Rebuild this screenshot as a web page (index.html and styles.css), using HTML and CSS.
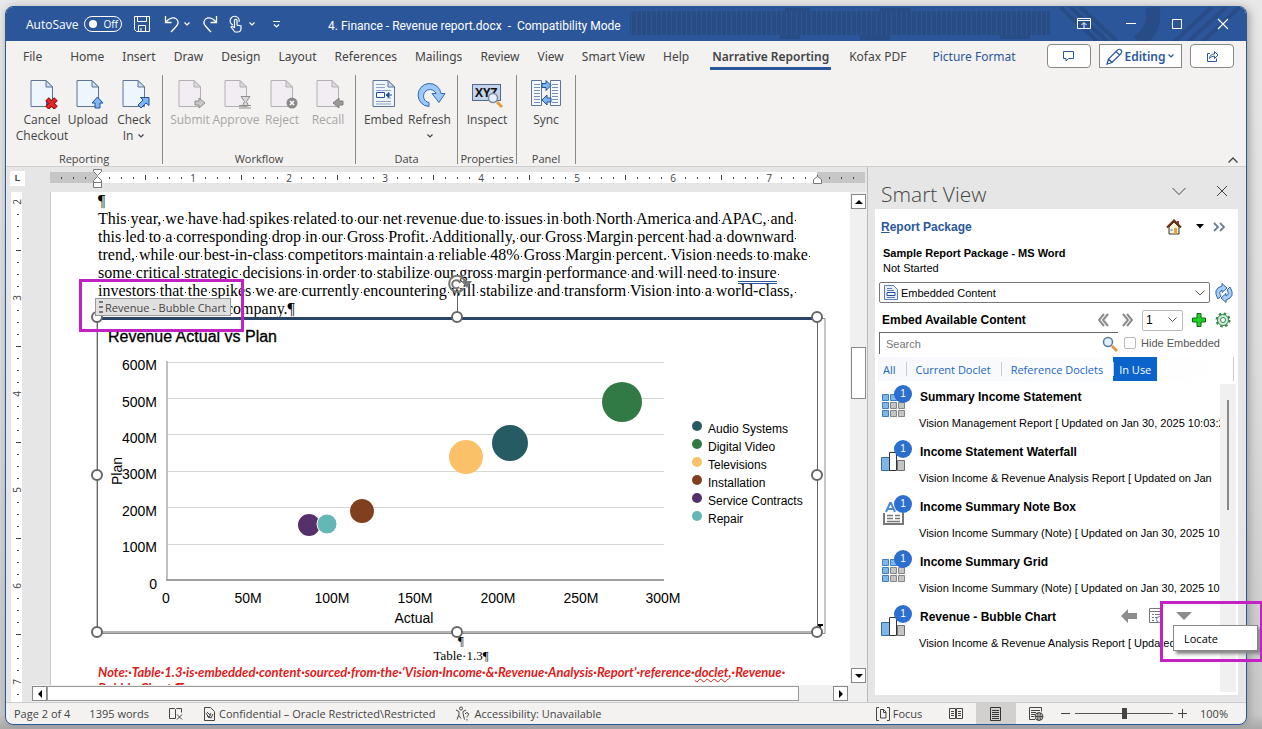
FILE: index.html
```html
<!DOCTYPE html>
<html lang="en">
  <head>
    <title>4. Finance - Revenue report.docx</title>
    <meta charset="UTF-8">
    <meta name="viewport" content="width=device-width, initial-scale=1.0">
    <link rel="stylesheet" href="styles.css">
  </head>

  <body>
    <!-- Shared icon shapes -->
    <svg class="defs" width="0" height="0">
      <symbol id="chevron" viewBox="0 0 8 8"><path d="M1.5 2.5l2.5 2.5 2.5-2.5" fill="none" stroke="currentColor" stroke-width="1.2"/></symbol>
      <symbol id="doc" viewBox="0 0 32 32">
        <path d="M5 3.500h15l6.500 6.500v19.500h-21.500z" fill="#eef5fd" stroke="#5c7596"/>
        <path d="M20 3.500v6.500h6.500z" fill="#cfdff2" stroke="#5c7596"/>
      </symbol>
      <symbol id="doc-off" viewBox="0 0 32 32">
        <path d="M5 3.500h15l6.500 6.500v19.500h-21.500z" fill="#f2edf2" stroke="#b3b0b3"/>
        <path d="M20 3.500v6.500h6.500z" fill="#dcd9dc" stroke="#b3b0b3"/>
      </symbol>
      <symbol id="grid" viewBox="0 0 34 34">
        <g fill="#7fb5e8" stroke="#3f7fc0"><path d="M2.500 9.500h6v6h-6zM2.500 17.500h6v6h-6zM2.500 25.500h6v6h-6zM10.500 9.500h6v6h-6z"/></g>
        <g fill="#c4c4c4" stroke="#858585"><path d="M10.500 17.500h6v6h-6zM18.500 17.500h6v6h-6zM10.500 25.500h6v6h-6zM18.500 25.500h6v6h-6zM18.500 9.500h6v6h-6z"/></g>
      </symbol>
      <symbol id="bars" viewBox="0 0 34 34">
        <path d="M1.500 17.500h8v13h-8z" fill="#7fb5e8" stroke="#2f6fb0"/>
        <path d="M17.500 20.500h7v10h-7z" fill="#c4c4c4" stroke="#707070"/>
        <path d="M9.500 12.500h7v18h-7z" fill="#fff" stroke="#333"/>
      </symbol>
      <symbol id="note" viewBox="0 0 34 34">
        <path d="M6 17l4-9h1l4 9M8 14h5" fill="none" stroke="#4a8ad0" stroke-width="2"/>
        <path d="M4 18v11h19v-11" fill="none" stroke="#777" stroke-width="2"/>
        <path d="M7 20.500h6M15 20.500h5M7 23.500h6M15 23.500h5M7 26.500h13" stroke="#777" stroke-width="1.500"/>
      </symbol>
    </svg>

    <div class="window">
      <header class="titlebar">
        <svg class="titlebar-art" width="440" height="34" aria-hidden="true">
          <defs><pattern id="lines" width="5" height="24" patternUnits="userSpaceOnUse"><path d="M1.500 0v24" stroke="#31568f"/></pattern></defs>
          <path d="M0 4h155v-3h25v3h70v-3h30v3h140v24h-20v4h-30v-4h-110v5h-30v-5h-60v4h-20v-4h-150z" fill="#284c86"/>
          <path d="M0 4h420v24h-420z" fill="url(#lines)"/>
        </svg>
        <svg class="titlebar-stripes" width="190" height="34" aria-hidden="true">
          <g stroke="#284c86" fill="none"><path d="M4 0l38 35M14 0l38 35M24 0l38 35" stroke-width="4"/><path d="M96 0q6 20-14 35" stroke-width="14"/><path d="M118 35l38-35M132 35l38-35M146 35l38-35" stroke-width="4"/></g>
        </svg>
        <div class="quick">
          <span id="autosave-label">AutoSave</span>
          <button class="toggle" aria-labelledby="autosave-label"><i></i>Off</button>
          <button class="bare" aria-label="Save"><svg width="18" height="18" fill="none" stroke="#fff"><path d="M1.500 1.500h15v15h-13l-2-2zM4.500 1.500v5h9v-5M5.500 16.500v-6h7v6M8 16v-3"/></svg></button>
          <button class="bare undo" aria-label="Undo"><svg width="16" height="18" fill="none" stroke="#fff" stroke-width="1.300"><path d="M1.500 1v6.500h6M1.500 7.500q4-5 9-4.500 4 1.500 3.500 5.500-.5 2-7 8.500"/></svg><svg class="chev"><use href="#chevron"/></svg></button>
          <button class="bare" aria-label="Redo"><svg width="16" height="18" fill="none" stroke="#fff" stroke-width="1.300"><path d="M14.500 1v6.500h-6M14.500 7.500q-4-5-9-4.500-4 1.500-3.500 5.500.5 2 7 8.500"/></svg></button>
          <button class="bare touch" aria-label="Touch mode"><svg width="14" height="18" fill="none" stroke="#fff" stroke-width="1.200"><path d="M4 10a4.500 4.500 0 1 1 6-3M5.500 13v-8q1.500-1.500 2.500 0v5l4 1v3q-.5 3-3 3h-3l-4-5q1-1.500 3.500 1"/></svg><svg class="chev"><use href="#chevron"/></svg></button>
          <button class="bare" aria-label="Customize toolbar"><svg width="9" height="9" fill="none" stroke="#fff" stroke-width="1.200"><path d="M1 1.500h7M2 4.500l2.500 2.500 2.500-2.500"/></svg></button>
        </div>
        <h1>4. Finance - Revenue report.docx&nbsp; -&nbsp; Compatibility Mode</h1>
        <div class="controls">
          <button class="bare" aria-label="Ribbon display options"><svg width="14" height="12" fill="none" stroke="#fff"><path d="M.5 .5h13v10h-13zM.5 2.500h13M7 10v-5M4.500 7l2.500-2.500 2.500 2.500"/></svg></button>
          <button class="bare" aria-label="Minimize"><svg width="12" height="12" stroke="#fff"><path d="M1 5.500h10"/></svg></button>
          <button class="bare" aria-label="Maximize"><svg width="12" height="12" fill="none" stroke="#fff"><path d="M1.500 1.500h9v9h-9z"/></svg></button>
          <button class="bare" aria-label="Close"><svg width="12" height="12" stroke="#fff" stroke-width="1.200"><path d="M1 1l10 10M11 1l-10 10"/></svg></button>
        </div>
      </header>

      <nav class="tabs">
        <a href="#" class="file">File</a>
        <a href="#">Home</a>
        <a href="#">Insert</a>
        <a href="#">Draw</a>
        <a href="#">Design</a>
        <a href="#">Layout</a>
        <a href="#">References</a>
        <a href="#">Mailings</a>
        <a href="#">Review</a>
        <a href="#">View</a>
        <a href="#">Smart View</a>
        <a href="#">Help</a>
        <a href="#" class="active">Narrative Reporting</a>
        <a href="#">Kofax PDF</a>
        <a href="#" class="context">Picture Format</a>
        <div class="tab-actions">
          <button aria-label="Comments"><svg width="12" height="11" fill="none" stroke="#2b579a"><path d="M.5 .5h10v7h-5l-2.500 2.500v-2.500h-2.500z"/></svg></button>
          <button class="editing"><svg width="17" height="17" fill="none" stroke="#2b579a" stroke-width="1.200"><path d="M1 16l1.500-5 9-9q2-1.500 3.500 0t0 3.500l-9 9zM10 3.500l3.500 3.500M2.500 11l3.500 3.500"/></svg>Editing<svg class="chev"><use href="#chevron"/></svg></button>
          <button aria-label="Share"><svg width="13" height="12" fill="none" stroke="#2b579a"><path d="M4 3.500h-2.500v8h9v-3M3.500 8.500q.5-4.500 5-4.500v-2.500l3.500 3.500-3.500 3.500v-2.500q-3 0-5 2.500z"/></svg></button>
        </div>
      </nav>

      <div class="ribbon">
        <section class="group reporting">
          <div class="tools">
            <button><svg width="32" height="32"><use href="#doc"/><path d="M20 23h9v7h-9z" fill="#2b6cc0"/><path d="M21 22l9 9M30 22l-9 9" stroke="#8c1010" stroke-width="5"/><path d="M21.500 22.500l8 8M29.500 22.500l-8 8" stroke="#e8262a" stroke-width="3"/></svg>Cancel<br>Checkout</button>
            <button><svg width="32" height="32"><use href="#doc"/><path d="M25.500 20l5.500 6h-3v5h-5v-5h-3z" fill="#7fb4f5" stroke="#1f4f9c"/></svg>Upload</button>
            <button><svg width="32" height="32"><use href="#doc"/><path d="M31 20.500v8l-3-2.500-5 5-3-3 5-5-2.500-2.500z" fill="#7fb4f5" stroke="#1f4f9c"/></svg>Check<br><span>In <svg class="chev"><use href="#chevron"/></svg></span></button>
          </div>
          <h2>Reporting</h2>
        </section>
        <section class="group workflow">
          <div class="tools">
            <button disabled><svg width="32" height="32"><use href="#doc-off"/><path d="M21 24h4v-3l6 5-6 5v-3h-4z" fill="#c9c9c9" stroke="#8f8f8f"/></svg>Submit</button>
            <button disabled><svg width="32" height="32"><use href="#doc-off"/><path d="M21 19.500h9l-3.500 5 2 4.500h-6l2-4.500zM19 28.500h12M19 31h12" fill="#d8d8d8" stroke="#8f8f8f"/></svg>Approve</button>
            <button disabled><svg width="32" height="32"><use href="#doc-off"/><circle cx="26" cy="26" r="5.500" fill="#8a8a8a"/><path d="M24 24l4 4M28 24l-4 4" stroke="#fff" stroke-width="1.500"/></svg>Reject</button>
            <button disabled><svg width="32" height="32"><use href="#doc-off"/><path d="M31 24h-4v-3l-6 5 6 5v-3h4z" fill="#999" stroke="#808080"/></svg>Recall</button>
          </div>
          <h2>Workflow</h2>
        </section>
        <section class="group data">
          <div class="tools">
            <button><svg width="32" height="32"><use href="#doc"/><path d="M8 7.500h9M8 10.500h9M8 13.500h15M8 24.500h15M8 27h15M19 21h4" stroke="#8ca3c4"/><path d="M8.500 15.500h8v5h-8z" fill="#fff" stroke="#1f4f9c"/><path d="M24 18h-5M21 15.500l-3 2.500 3 2.500z" fill="#1f4f9c" stroke="#1f4f9c"/></svg>Embed</button>
            <button><svg width="32" height="32"><path d="M15 29.500v-4a6.500 6.500 0 1 1 7-9h-4l7 9 6-9h-4a11.500 11.500 0 1 0-12 13z" fill="#9cc8fa" stroke="#3068b4"/></svg>Refresh<svg class="chev below"><use href="#chevron"/></svg></button>
          </div>
          <h2>Data</h2>
        </section>
        <section class="group">
          <div class="tools">
            <button><svg width="32" height="32"><rect x="1.500" y="7.500" width="28" height="16" fill="#c4d3ea" stroke="#50698f"/><text x="4" y="20" class="xyz">XYZ</text><circle cx="22" cy="21" r="4.500" fill="#e6f0fb" stroke="#7b8ba3" stroke-width="1.500"/><path d="M26 25l5 5" stroke="#e59a3c" stroke-width="3"/></svg>Inspect</button>
          </div>
          <h2>Properties</h2>
        </section>
        <section class="group">
          <div class="tools">
            <button><svg width="32" height="32"><path d="M1.500 3.500h10v25h-10zM20.500 3.500h10v25h-10z" fill="#f4f8fd" stroke="#5c7596"/><path d="M4 7.500h6M4 10.500h6M4 13.500h6M4 16.500h6M4 19.500h6M4 22.500h6M4 25.500h6M22 7.500h6M22 10.500h6M22 13.500h6M22 16.500h6M22 19.500h6M22 22.500h6M22 25.500h6" stroke="#7590ba"/><path d="M12 6.500h4v-3l5 5-5 5v-3h-4zM21 21h-4v-3l-5 5 5 5v-3h4z" fill="#7fb4f5" stroke="#1f4f9c"/></svg>Sync</button>
          </div>
          <h2>Panel</h2>
        </section>
        <button class="bare collapse" aria-label="Collapse ribbon"><svg width="12" height="8" fill="none" stroke="#444" stroke-width="1.300"><path d="M1.500 6.500l4.500-4.500 4.500 4.500"/></svg></button>
      </div>

      <main class="workspace">
        <div class="editor">
          <div class="ruler-row">
            <span class="tab-stop">L</span>
            <svg class="ruler" width="816" height="22">
              <defs>
                <pattern id="ticks" x="47" width="96" height="22" patternUnits="userSpaceOnUse">
                  <path d="M12.500 10v2M24.500 10v2M36.500 10v2M60.500 10v2M72.500 10v2M84.500 10v2M48.500 8v5" stroke="#444"/>
                </pattern>
              </defs>
              <path d="M0 5h815v11h-815z" fill="#c6c6c6"/>
              <path d="M47 5h720v11h-720z" fill="#fff"/>
              <path d="M0 5h815v11h-815z" fill="url(#ticks)"/>
              <g class="ruler-num">
                <text x="143" y="15">1</text><text x="239" y="15">2</text><text x="335" y="15">3</text><text x="431" y="15">4</text>
                <text x="527" y="15">5</text><text x="623" y="15">6</text><text x="719" y="15">7</text>
              </g>
              <g fill="#fff" stroke="#777"><path d="M43.500 2.500h8v2l-4 4-4-4zM43.500 15.500v-2l4-4 4 4v2zM43.500 15.500h8v5h-8zM763.500 16.500v-4l4-3 4 3v4z"/></g>
            </svg>
          </div>

          <div class="editor-body">
            <svg class="ruler-left" width="11">
              <defs>
                <pattern id="vticks" y="10" width="11" height="96" patternUnits="userSpaceOnUse">
                  <path d="M6 12.500h2M6 24.500h2M6 36.500h2M6 60.500h2M6 72.500h2M6 84.500h2M5 48.500h5" stroke="#444"/>
                </pattern>
              </defs>
              <rect width="11" height="100%" fill="#fff"/>
              <rect width="11" height="100%" fill="url(#vticks)"/>
              <g class="ruler-num">
                <text transform="translate(10 10) rotate(-90)">2</text><text transform="translate(10 106) rotate(-90)">3</text>
                <text transform="translate(10 202) rotate(-90)">4</text><text transform="translate(10 298) rotate(-90)">5</text>
                <text transform="translate(10 394) rotate(-90)">6</text><text transform="translate(10 490) rotate(-90)">7</text>
              </g>
            </svg>

            <div class="page-column">
              <article class="page">
                <p class="mark">¶</p>
                <p class="show-spaces">This year, we have had spikes related to our net revenue due to issues in both North America and APAC, and <br>this led to a corresponding drop in our Gross Profit. Additionally, our Gross Margin percent had a downward <br>trend, while our best-in-class competitors maintain a reliable 48% Gross Margin percent. Vision needs to make <br>some critical strategic decisions in order to stabilize our gross margin performance and will need to <span class="grammar">insure</span> <br>investors that the spikes we are currently encountering will stabilize and transform Vision into a world-class, <br><span class="last-line">company.¶</span></p>

                <figure class="chart">
                  <svg width="732" height="318">
                    <path d="M720 2.500h8v315h-728v-315" class="cell"/>
                    <path d="M1 2.500h719" stroke="#2b4566" stroke-width="3"/>
                    <text x="11" y="26" class="chart-title">Revenue Actual vs Plan</text>
                    <path d="M70 46.500h497M70 82.500h497M70 118.500h497M70 155.500h497M70 191.500h497M70 228.500h497" stroke="#d6d6d6"/>
                    <path d="M70 45v220" stroke="#c0c0c0" stroke-width="2"/>
                    <path d="M69 264h498" stroke="#a0a0a0" stroke-width="2"/>
                    <g class="axis end">
                      <text x="60" y="54">600M</text><text x="60" y="91">500M</text><text x="60" y="127">400M</text><text x="60" y="163">300M</text>
                      <text x="60" y="200">200M</text><text x="60" y="236">100M</text><text x="60" y="273">0</text>
                    </g>
                    <g class="axis middle">
                      <text x="69" y="287">0</text><text x="151" y="287">50M</text><text x="235" y="287">100M</text><text x="318" y="287">150M</text>
                      <text x="401" y="287">200M</text><text x="484" y="287">250M</text><text x="566" y="287">300M</text>
                      <text x="317" y="307">Actual</text>
                      <text transform="translate(25 155) rotate(-90)">Plan</text>
                    </g>
                    <circle cx="525" cy="86" r="20" fill="#317a45"/>
                    <circle cx="413" cy="127" r="18" fill="#265b63"/>
                    <circle cx="369" cy="141" r="17" fill="#fac168"/>
                    <circle cx="265" cy="195" r="12" fill="#80401f"/>
                    <circle cx="212" cy="209" r="11" fill="#55306a"/>
                    <circle cx="230" cy="208" r="10" fill="#63b7b4" stroke="#fff"/>
                    <g class="legend">
                      <circle cx="600" cy="110" r="5" fill="#265b63"/><text x="611" y="117">Audio Systems</text>
                      <circle cx="600" cy="128" r="5" fill="#317a45"/><text x="611" y="135">Digital Video</text>
                      <circle cx="600" cy="146" r="5" fill="#fac168"/><text x="611" y="153">Televisions</text>
                      <circle cx="600" cy="164" r="5" fill="#80401f"/><text x="611" y="171">Installation</text>
                      <circle cx="600" cy="182" r="5" fill="#55306a"/><text x="611" y="189">Service Contracts</text>
                      <circle cx="600" cy="200" r="5" fill="#63b7b4"/><text x="611" y="207">Repair</text>
                    </g>
                    <!-- selection frame and handles -->
                    <path d="M360.500-22v24M.5 2v314h720v-314" class="frame"/>
                    <path d="M721 309h5M723 309v5" stroke="#000" stroke-width="2"/>
                    <path d="M367-28a8 8 0 1 1 1-6" class="rotate"/><path d="M363-33a4 4 0 1 0-1 4" class="rotate"/><path d="M364-35h11l-5 7z" fill="#777"/>
                    <g class="handles">
                      <circle cx="0" cy="1" r="5"/><circle cx="360" cy="1" r="5"/><circle cx="720" cy="1" r="5"/>
                      <circle cx="0" cy="159" r="5"/><circle cx="720" cy="159" r="5"/>
                      <circle cx="0" cy="316" r="5"/><circle cx="360" cy="316" r="5"/><circle cx="720" cy="316" r="5"/>
                    </g>
                  </svg>
                  <figcaption><span class="mark">¶</span>Table·1.3¶</figcaption>
                  <div class="content-tag"><i></i>Revenue - Bubble Chart</div>
                  <div class="callout callout-tag"></div>
                </figure>

                <p class="note">Note:·Table·1.3·is·embedded·content·sourced·from·the·‘Vision·Income·&amp;·Revenue·Analysis·Report’·reference·<span class="spelling">doclet</span>,·Revenue·<br>Bubble·Chart.¶</p>
              </article>
              <div class="hscroll">
                <button aria-label="Scroll left"><svg width="6" height="8"><path d="M5 0v8l-4-4z"/></svg></button>
                <div class="hthumb"></div>
                <button aria-label="Scroll right"><svg width="6" height="8"><path d="M1 0v8l4-4z"/></svg></button>
              </div>
            </div>

            <div class="vscroll">
              <button aria-label="Scroll up"><svg width="8" height="6"><path d="M0 5h8l-4-4z"/></svg></button>
              <div class="vthumb"></div>
              <button aria-label="Scroll down"><svg width="8" height="6"><path d="M0 1h8l-4 4z"/></svg></button>
            </div>
          </div>
        </div>

        <aside class="panel">
          <div class="panel-head">
            <h2>Smart View</h2>
            <button class="bare" aria-label="Pane options"><svg width="14" height="9" fill="none" stroke="#444"><path d="M.5 1l6.500 6.500 6.500-6.500"/></svg></button>
            <button class="bare" aria-label="Close pane"><svg width="12" height="12" stroke="#444"><path d="M1 1l10 10M11 1l-10 10"/></svg></button>
          </div>
          <div class="panel-body">
            <div class="package-row">
              <a href="#"><u>R</u>eport Package</a>
              <button class="bare" aria-label="Home"><svg width="16" height="16"><path d="M3 8v7h10v-7l-5-5z" fill="#fbf3d8" stroke="#333"/><path d="M11 2h2v4h-2z" fill="#a33"/><path d="M1 8.500l7-7 7 7" fill="none" stroke="#6e3210" stroke-width="2"/><path d="M8 9h3v6h-3z" fill="#e8a13c"/><path d="M4.500 10h2v2h-2z" fill="#7ba7d9"/></svg></button>
              <button class="bare package-menu" aria-label="Home menu"><svg width="8" height="5"><path d="M0 0h8l-4 4.500z"/></svg></button>
              <button class="bare" aria-label="More"><svg width="13" height="10" fill="none" stroke="#6b7d96" stroke-width="1.800"><path d="M1 1l4 4-4 4M7 1l4 4-4 4"/></svg></button>
            </div>
            <div class="package">
              <b>Sample Report Package - MS Word</b>
              <span>Not Started</span>
            </div>
            <div class="source-row">
              <div class="source-select">
                <svg width="14" height="15" fill="#e8f1fb" stroke="#5b7fb5"><path d="M.5 .5h9l4 4v10h-13z"/><path d="M3 3.500h5M3 5.500h7M3 12.500h8"/><path d="M3 7.500h8v3h-8z" fill="#fff" stroke="#1f4f9c"/></svg>
                <select aria-label="Content type"><option>Embedded Content</option></select>
                <svg width="10" height="6" fill="none" stroke="#555"><path d="M.5 .5l4.500 4.500 4.500-4.500"/></svg>
              </div>
              <button class="bare" aria-label="Refresh list"><svg width="20" height="20" fill="#a9cdf7" stroke="#2f66b3"><path d="M4 16q-6-10 4-13v-2.500l5 4.500-5 4.500v-2.500q-4 2-1 6zM16 4q6 10-4 13v2.500l-5-4.500 5-4.500v2.500q4-2 1-6z"/></svg></button>
            </div>
            <div class="pager-row">
              <b>Embed Available Content</b>
              <button class="bare" aria-label="Previous page"><svg width="11" height="14" fill="none" stroke="#8b8b8b" stroke-width="2"><path d="M6 1l-5 6 5 6M10 1l-5 6 5 6"/></svg></button>
              <button class="bare" aria-label="Next page"><svg width="11" height="14" fill="none" stroke="#8b8b8b" stroke-width="2"><path d="M1 1l5 6-5 6M5 1l5 6-5 6"/></svg></button>
              <div class="page-select">
                <select aria-label="Page"><option>1</option></select>
                <svg width="9" height="6" fill="none" stroke="#555"><path d="M.5 .5l4 4 4-4"/></svg>
              </div>
              <button class="bare" aria-label="Add"><svg width="14" height="14"><path d="M5 .5h4v4.500h4.500v4h-4.500v4.500h-4v-4.500h-4.500v-4h4.500z" fill="#1fd02c" stroke="#0a6b12"/></svg></button>
              <button class="bare" aria-label="Settings"><svg width="16" height="16" fill="none" stroke="#2f8a4c"><circle cx="8" cy="8" r="5.500" fill="#cfe9d6"/><circle cx="8" cy="8" r="2.500" fill="#fff"/><circle cx="8" cy="8" r="6.500" stroke-width="2" stroke-dasharray="2.500 2.600"/></svg></button>
            </div>
            <div class="search-row">
              <div class="search">
                <input type="text" placeholder="Search" aria-label="Search">
                <svg width="16" height="16" fill="none"><circle cx="6" cy="6" r="4.500" fill="#e3f0fc" stroke="#56799f" stroke-width="1.500"/><path d="M10 10l5 5" stroke="#dd9a45" stroke-width="3"/></svg>
              </div>
              <label><input type="checkbox">Hide Embedded</label>
            </div>
            <div class="filters">
              <button>All</button>
              <button>Current Doclet</button>
              <button>Reference Doclets</button>
              <button class="active">In Use</button>
            </div>
            <div class="list-wrap">
              <ul class="items">
                <li>
                  <div class="thumb"><svg width="34" height="34"><use href="#grid"/></svg><span class="badge">1</span></div>
                  <div class="info"><b>Summary Income Statement</b><span>Vision Management Report [ Updated on Jan 30, 2025 10:03:25</span></div>
                </li>
                <li>
                  <div class="thumb"><svg width="34" height="34"><use href="#bars"/></svg><span class="badge">1</span></div>
                  <div class="info"><b>Income Statement Waterfall</b><span>Vision Income &amp; Revenue Analysis Report [ Updated on Jan</span></div>
                </li>
                <li>
                  <div class="thumb"><svg width="34" height="34"><use href="#note"/></svg><span class="badge">1</span></div>
                  <div class="info"><b>Income Summary Note Box</b><span>Vision Income Summary (Note) [ Updated on Jan 30, 2025 10</span></div>
                </li>
                <li>
                  <div class="thumb"><svg width="34" height="34"><use href="#grid"/></svg><span class="badge">1</span></div>
                  <div class="info"><b>Income Summary Grid</b><span>Vision Income Summary (Note) [ Updated on Jan 30, 2025 10</span></div>
                </li>
                <li class="selected">
                  <div class="thumb"><svg width="34" height="34"><use href="#bars"/></svg><span class="badge">1</span></div>
                  <div class="info"><b>Revenue - Bubble Chart</b><span>Vision Income &amp; Revenue Analysis Report [ Updated</span></div>
                  <div class="row-actions">
                    <button class="bare" aria-label="Embed"><svg width="16" height="16"><path d="M0 8l7-7v4h9v6h-9v4z" fill="#8c8c8c"/></svg></button>
                    <button class="bare" aria-label="Preview"><svg width="15" height="16" fill="none" stroke="#777"><path d="M.5 .5h13v14h-13zM.5 3.500h13M3 6.500h2M6 6.500h5M3 9.500h2M6 9.500h3M3 12.500h2"/><circle cx="10.500" cy="11.500" r="3" fill="#fff" stroke="#4a7fd0"/></svg></button>
                    <button class="bare" aria-label="Actions"><svg width="16" height="8"><path d="M0 0h16l-8 8z" fill="#8c8c8c"/></svg></button>
                  </div>
                  <div class="menu"><button>Locate</button></div>
                  <div class="callout callout-menu"></div>
                </li>
              </ul>
              <div class="list-scroll"><i></i></div>
            </div>
          </div>
        </aside>
      </main>

      <footer class="status">
        <span>Page 2 of 4</span>
        <span class="words">1395 words</span>
        <svg width="16" height="14" fill="none" stroke="#444"><path d="M7.500 11.500h-6v-10h5l1 1v9M7.500 2.500l1-1h5v4M9 7.500l5 5M14 7.500l-5 5"/></svg>
        <span class="secret"><svg width="11" height="14" fill="none" stroke="#444"><path d="M.5 .5h6l4 4v9h-10zM2 6l3 5 2-5M3 9l4 2 2-4M3 5l3 3"/></svg>Confidential – Oracle Restricted\Restricted</span>
        <span class="access"><svg width="15" height="15" fill="none" stroke="#444"><circle cx="6" cy="2.500" r="1.500"/><path d="M1 4l3 1.500v3l-2 5M11 4l-3 1.500v2l1.500 6M4 9.500l2 3M10 8q1-2 3-1 1.500 2-1 3.500v1M12 13v1.500"/></svg>Accessibility: Unavailable</span>
        <div class="views">
          <button class="focus"><svg width="14" height="14" fill="none" stroke="#444"><path d="M3 .5h-2.500v13h2.500M11 .5h2.500v13h-2.500M4.500 2.500h3l2.500 2.500v6h-5.500zM7.500 2.500v3h2.500"/></svg>Focus</button>
          <button aria-label="Read mode"><svg width="14" height="12" fill="none" stroke="#444"><path d="M.5 .5h6v10h-6zM7.500 .5h6v10h-6zM2 3.500h3M2 5.500h3M2 7.500h3M9 3.500h3M9 5.500h3M9 7.500h3"/></svg></button>
          <button class="active" aria-label="Print layout"><svg width="12" height="14" fill="none" stroke="#333"><path d="M.5 .5h10v13h-10zM2 3.500h7M2 5.500h7M2 7.500h7M2 9.500h7M2 11.500h7"/></svg></button>
          <button aria-label="Web layout"><svg width="15" height="14" fill="none" stroke="#444"><path d="M6 12.500h-5.500v-12h12v4M2 3.500h9M2 5.500h5M2 7.500h4M2 9.500h3"/><circle cx="10" cy="9.500" r="4" fill="#f3f2f1"/><path d="M6 9.500h8M10 5.500v8M8.500 6q-1 3.500 0 7M11.500 6q1 3.500 0 7"/></svg></button>
        </div>
        <div class="zoom">
          <button class="bare" aria-label="Zoom out"><svg width="9" height="9" stroke="#444"><path d="M0 4.500h9"/></svg></button>
          <input type="range" min="0" max="100" value="50" aria-label="Zoom">
          <button class="bare" aria-label="Zoom in"><svg width="9" height="9" stroke="#444"><path d="M0 4.500h9M4.500 0v9"/></svg></button>
          <span>100%</span>
        </div>
      </footer>
    </div>

    <script src="script.js"></script>
  </body>
</html>
```
FILE: styles.css
```css
* { box-sizing: border-box; }
html { height: 100%; }
body {
  height: 100%;
  margin: 0;
  padding: 6px 15px 4px 5px;
  background-image: linear-gradient(180deg, #e8e8e8 0%, #dedede 50%, #c8c8c8 98%, #a9a9a9 100%);
  font-family: "Open Sans", "Noto Sans", sans-serif;
  font-size: 12px;
  color: #444;
  overflow: hidden;
}
h1, h2, p, ul, figure { margin: 0; padding: 0; font-weight: normal; }
svg { display: block; flex: none; }
button, input, select { font: inherit; color: inherit; margin: 0; }
button { border: none; padding: 0; background: none; cursor: pointer; }
a { color: inherit; text-decoration: none; }
.defs { position: absolute; }
.bare { display: flex; align-items: center; }
.chev { width: 8px; height: 8px; }

.window {
  height: 100%;
  display: flex;
  flex-direction: column;
  border: 1px solid #2b579a;
  border-radius: 8px;
  background-color: #f3f2f1;
  box-shadow: 2px 2px 10px #999;
}

/* title bar */
.titlebar {
  position: relative;
  height: 34px;
  flex: none;
  display: flex;
  align-items: center;
  justify-content: space-between;
  padding: 0 17px 0 20px;
  border-radius: 7px 7px 0 0;
  background-color: #2b579a;
  color: white;
}
.titlebar-art { position: absolute; right: 176px; top: 0; }
.titlebar-stripes { position: absolute; right: 0; top: 0; }
.quick { display: flex; align-items: center; gap: 11px; }
.quick .toggle {
  display: flex;
  align-items: center;
  gap: 6px;
  width: 38px;
  height: 16px;
  margin-left: -5px;
  padding-left: 4px;
  border: 1px solid white;
  border-radius: 8px;
  font-size: 10px;
}
.toggle i { width: 8px; height: 8px; border-radius: 4px; background-color: white; }
.quick .undo { gap: 3px; margin-left: 2px; }
.quick .touch { gap: 5px; }
.quick .bare:last-child { margin-left: 5px; }
h1 { position: absolute; left: 322px; top: 10px; font: 12px/18px Roboto, sans-serif; white-space: pre; }
.controls { position: relative; display: flex; align-items: center; gap: 34px; }

/* ribbon tabs */
.tabs {
  flex: none;
  height: 34px;
  display: flex;
  align-items: center;
  gap: 18px;
  padding: 0 12px 2px 17px;
  font-family: "Noto Sans", "Open Sans", sans-serif;
  white-space: nowrap;
}
.tabs a { line-height: 20px; padding-top: 3px; border-bottom: 3px solid transparent; }
.tabs .file { margin-right: 10px; }
.tabs .active { margin-left: 3px; padding: 3px 2px 0; font-weight: 600; border-color: #2b579a; }
.tabs .context { color: #2b579a; margin-left: 8px; }
.tab-actions { display: flex; gap: 8px; margin-left: auto; padding-bottom: 2px; }
.tab-actions button {
  display: flex;
  align-items: center;
  justify-content: center;
  width: 44px;
  height: 24px;
  border: 1px solid #8a8886;
  border-radius: 4px;
  background-color: white;
}
.tab-actions .editing { width: 83px; gap: 1px; border-radius: 0; color: #2b579a; font-weight: 600; }

/* ribbon */
.ribbon { flex: none; height: 92px; display: flex; position: relative; border-bottom: 1px solid #d2d0ce; }
.group {
  min-width: 59px;
  height: 89px;
  display: flex;
  flex-direction: column;
  justify-content: space-between;
  align-items: center;
  border-right: 1px solid #8a8886;
}
.reporting { width: 157px; }
.reporting .tools { padding-left: 8px; }
.workflow { width: 193px; }
.data { width: 102px; }
.tools { display: flex; }
.tools button { display: flex; flex-direction: column; align-items: center; width: 46px; padding-top: 2px; line-height: 16px; white-space: nowrap; }
.tools button > svg:first-child { margin-bottom: 3px; }
.tools .below { margin-top: 4px; }
.tools span { display: flex; align-items: center; gap: 4px; }
.tools button:disabled { color: #a6a6a6; }
.group h2 { font-size: 11px; line-height: 10px; }
.xyz { font: bold 12px "Open Sans", sans-serif; fill: #111; }
.collapse { position: absolute; right: 7px; bottom: 2px; }

/* workspace */
.workspace { flex: 1; min-height: 0; display: flex; background-color: #e6e6e6; }
.editor { flex: 1; min-width: 0; display: flex; flex-direction: column; }
.ruler-row { height: 25px; flex: none; display: flex; }
.tab-stop {
  width: 15px;
  height: 15px;
  margin: 4px 29px 0 4px;
  background-color: white;
  font: bold 9px/15px "Liberation Sans", sans-serif;
  text-align: center;
}
.ruler-row .ruler { margin-left: -4px; }
.ruler-num { font-size: 10px; text-anchor: middle; fill: #444; }
.editor-body { flex: 1; min-height: 0; display: flex; }
.ruler-left { height: 100%; margin: 0 28px 0 5px; overflow: visible; }
.page-column { flex: 1; min-width: 0; display: flex; flex-direction: column; }
.page {
  flex: 1;
  min-height: 0;
  padding-left: 47px;
  overflow: hidden;
  background-color: white;
  border-left: 1px solid #c8c8c8;
  color: black;
  font: 16px/18px "Liberation Serif", serif;
  white-space: nowrap;
}
.show-spaces { white-space: pre; }
.space { background: linear-gradient(#000, #000) center 10px / 1px 1px no-repeat; }
.last-line { padding-left: 128px; }
.grammar { border-bottom: 3px double #2b579a; line-height: 16px; }
.chart { position: relative; margin: -2px 0 0 -1px; }
.chart svg { overflow: visible; }
.cell { fill: none; stroke: #8c8c8c; }
.frame { fill: none; stroke: #666; }
.rotate { fill: none; stroke: #777; stroke-width: 2; }
.handles circle { fill: white; stroke: #666; stroke-width: 2; }
.chart-title { font: 16px "Liberation Sans", sans-serif; stroke: black; stroke-width: .3; }
.axis { font: 14px "Liberation Sans", sans-serif; }
.end { text-anchor: end; }
.middle { text-anchor: middle; }
.legend { font: 12px "Liberation Sans", sans-serif; }
figcaption { width: 728px; text-align: center; font-size: 13px; line-height: 16px; }
figcaption .mark { display: block; line-height: 14px; }
.content-tag {
  position: absolute;
  left: -2px;
  top: -18px;
  display: flex;
  align-items: center;
  gap: 2px;
  height: 18px;
  padding: 0 4px 0 3px;
  background-color: #e0e0e0;
  border: 1px solid #999;
  color: #444;
  font: 11px "Open Sans", sans-serif;
}
.content-tag i { width: 4px; height: 12px; background-image: repeating-linear-gradient(180deg, #777 0, #777 2px, transparent 2px, transparent 5px); }
.callout { position: absolute; border: 3px solid #c321c3; pointer-events: none; }
.callout-tag { left: -18px; top: -37px; width: 165px; height: 53px; }
.note { color: #e01b1b; font: italic bold 13px/16px Lato, sans-serif; }
.spelling { text-decoration: underline wavy 1px; }

/* scroll bars */
.hscroll { display: flex; height: 17px; padding-top: 1px; margin-left: -18px; background-color: #f0f0f0; }
.hscroll button, .vscroll button {
  display: flex;
  align-items: center;
  justify-content: center;
  flex: none;
  width: 15px;
  height: 15px;
  background-color: white;
  border: 1px solid #888;
}
.hthumb { width: 752px; height: 15px; margin-right: auto; background-color: white; border: 1px solid #999; }
.hscroll button:last-child { margin-right: 2px; }
.vscroll { width: 17px; display: flex; flex-direction: column; padding: 2px 1px 19px; background-color: #f0f0f0; }
.vthumb { height: 52px; margin: 138px 0 auto; background-color: white; border: 1px solid #888; }

/* side panel */
.panel { flex: none; width: 379px; padding: 0 8px 7px 7px; border-left: 1px solid #bbb; display: flex; flex-direction: column; }
.panel-head { height: 42px; display: flex; align-items: center; gap: 30px; padding: 6px 10px 0 6px; }
.panel-head h2 { flex: 1; padding-top: 5px; font-size: 21px; font-weight: 300; }
.panel-body {
  flex: 1;
  min-height: 0;
  display: flex;
  flex-direction: column;
  background-color: white;
  color: black;
  font: 11px "Liberation Sans", sans-serif;
}
.panel-body b { font-size: 12px; }
.package-row { display: flex; align-items: center; gap: 14px; padding: 8px 12px 0 6px; height: 27px; }
.package-row a { flex: 1; color: #2b579a; font-size: 12px; font-weight: bold; }
.package-row .package-menu { margin-right: -5px; }
.package { display: flex; flex-direction: column; padding: 10px 8px 6px; line-height: 15px; }
.package b { font-size: 11px; }
.source-row { display: flex; align-items: center; gap: 4px; padding: 0 4px; }
.source-select {
  flex: 1;
  display: flex;
  align-items: center;
  height: 21px;
  padding: 0 4px;
  border: 1px solid #777;
  border-radius: 2px;
}
select { appearance: none; flex: 1; min-width: 0; border: none; background: none; padding: 0 3px; outline: none; }
.pager-row { display: flex; align-items: center; gap: 9px; padding: 0 7px; margin-top: 5px; height: 24px; }
.pager-row b { flex: 1; }
.pager-row .bare + .bare { margin-left: 4px; }
.pager-row .page-select + .bare + .bare { margin-left: 0; }
.page-select { display: flex; align-items: center; width: 41px; height: 21px; padding-right: 5px; border: 1px solid #bbb; border-radius: 2px; font-size: 12px; }
.search-row { display: flex; align-items: center; gap: 6px; padding-left: 4px; height: 22px; }
.search { display: flex; align-items: center; width: 239px; height: 22px; border-top: 1px solid #666; border-left: 1px solid #666; }
.search input { flex: 1; min-width: 0; border: none; padding: 0 6px; outline: none; }
.search input::placeholder { color: #767676; }
.search-row label { display: flex; align-items: center; gap: 5px; color: #555; }
.search-row label input { appearance: none; width: 12px; height: 12px; border: 1px solid #bbb; border-radius: 2px; background-color: white; }
.filters {
  display: flex;
  height: 24px;
  margin: 3px 4px 0 3px;
  background-image: linear-gradient(90deg, #f6f8fb, #fff);
  border-right: 1px solid #ccc;
  font: 11px "Open Sans", sans-serif;
  color: #1a66c2;
}
.filters button { padding: 0 10px; position: relative; }
.filters button:first-child { padding-left: 5px; }
.filters button + button::before { content: ""; position: absolute; left: 0; top: 5px; height: 14px; border-left: 1px solid #ccc; }
.filters .active { background-color: #0a64cc; color: white; padding: 0 6px; }
.list-wrap { flex: 1; min-height: 0; display: flex; padding: 3px 2px 3px 0; }
.items { flex: 1; min-width: 0; list-style: none; }
.items li { position: relative; display: flex; height: 55px; padding: 1px 0 0 5px; }
.thumb { position: relative; width: 39px; }
.badge {
  position: absolute;
  left: 14px;
  top: 0;
  width: 18px;
  height: 18px;
  border-radius: 9px;
  background-color: #2b6fd0;
  color: white;
  font-size: 10px;
  line-height: 18px;
  text-align: center;
}
.info { flex: 1; min-width: 0; display: flex; flex-direction: column; gap: 10px; padding-top: 4px; }
.info b { padding-left: 1px; line-height: 16px; }
.info span { line-height: 16px; white-space: nowrap; overflow: hidden; }
.selected .info span { margin-right: 46px; }
.row-actions { position: absolute; right: 28px; top: 4px; height: 16px; display: flex; align-items: center; gap: 12px; background-color: white; }
.menu {
  position: absolute;
  right: -38px;
  top: 21px;
  width: 85px;
  height: 26px;
  background-color: white;
  border: 1px solid #888;
  box-shadow: 3px 3px 3px #888;
}
.menu button { width: 100%; height: 100%; padding-left: 10px; text-align: left; font: 11px "Open Sans", sans-serif; }
.callout-menu { right: -43px; top: -3px; width: 103px; height: 61px; }
.list-scroll { width: 16px; background-color: #f0f0f0; }
.list-scroll i { display: block; width: 2px; height: 110px; margin: 16px 0 0 7px; background-color: #888; }

/* status bar */
.status {
  flex: none;
  height: 22px;
  display: flex;
  align-items: center;
  padding-left: 8px;
  border-top: 1px solid #ccc;
  font-size: 11px;
  white-space: nowrap;
}
.words { margin: 0 19px; }
.secret, .access { display: flex; align-items: center; gap: 4px; margin-left: 20px; }
.views { display: flex; margin-left: auto; height: 100%; }
.views button { display: flex; align-items: center; justify-content: center; width: 40px; }
.views .focus { width: 66px; gap: 3px; padding-right: 8px; }
.views .active { background-color: #d2d0ce; }
.zoom { display: flex; align-items: center; gap: 5px; padding: 0 18px 0 5px; }
.zoom span { margin-left: 8px; font-size: 11px; }
.zoom input { appearance: none; width: 98px; height: 12px; background: linear-gradient(#555, #555) center / 100% 1px no-repeat; }
.zoom input::-webkit-slider-thumb { appearance: none; width: 5px; height: 11px; background-color: #444; }
```
FILE: script.js
```javascript
// Show formatting marks: every space in the paragraph gets a dot drawn in it
let markSpaces = (node) => {
  Array.from(node.childNodes).forEach(child => {
    if (child.nodeType !== Node.TEXT_NODE) return markSpaces(child)
    let parts = document.createDocumentFragment()
    child.textContent.split(/( )/).forEach(part => {
      if (part !== " ") return parts.append(part)
      let span = document.createElement("span")
      span.className = "space"
      span.textContent = " "
      parts.append(span)
    })
    child.replaceWith(parts)
  })
}

document.querySelectorAll(".show-spaces").forEach(markSpaces)
```
